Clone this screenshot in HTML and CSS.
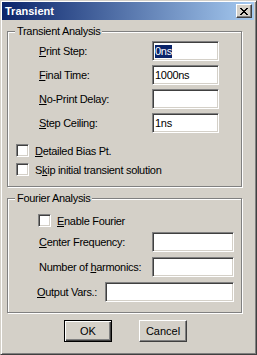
FILE: index.html
```
<!DOCTYPE html>
<html>
<head>
    <title>Transient</title>
    <link rel="stylesheet" href="styles.css">
</head>
<body>
    <div class="window">
        <div class="titlebar">
            <span class="title">Transient</span>
            <span class="close">
                <svg width="8" height="7" viewBox="0 0 8 7">
                    <path d="M0 0h2v1h-2zM6 0h2v1h-2zM1 1h2v1h-2zM5 1h2v1h-2zM2 2h4v1h-4zM3 3h2v1h-2zM2 4h4v1h-4zM1 5h2v1h-2zM5 5h2v1h-2zM0 6h2v1h-2zM6 6h2v1h-2z" fill="#000"/>
                </svg>
            </span>
        </div>

        <div class="client">
            <fieldset class="group group-transient">
                <legend>Transient Analysis</legend>
                <div class="field">
                    <span class="label"><u>P</u>rint Step:</span>
                    <span class="edit"><span class="selected">0ns</span></span>
                </div>
                <div class="field">
                    <span class="label"><u>F</u>inal Time:</span>
                    <span class="edit">1000ns</span>
                </div>
                <div class="field">
                    <span class="label"><u>N</u>o-Print Delay:</span>
                    <span class="edit"></span>
                </div>
                <div class="field">
                    <span class="label"><u>S</u>tep Ceiling:</span>
                    <span class="edit">1ns</span>
                </div>
                <div class="check first"><span class="box"></span><span><u>D</u>etailed Bias Pt.</span></div>
                <div class="check"><span class="box"></span><span>S<u>k</u>ip initial transient solution</span></div>
            </fieldset>

            <fieldset class="group group-fourier">
                <legend>Fourier Analysis</legend>
                <div class="check enable"><span class="box"></span><span><u>E</u>nable Fourier</span></div>
                <div class="field">
                    <span class="label"><u>C</u>enter Frequency:</span>
                    <span class="edit wide"></span>
                </div>
                <div class="field">
                    <span class="label">Number of <u>h</u>armonics:</span>
                    <span class="edit wide"></span>
                </div>
                <div class="field output">
                    <span class="label"><u>O</u>utput Vars.:</span>
                    <span class="edit long"></span>
                </div>
            </fieldset>

            <div class="buttons">
                <button class="btn default">OK</button>
                <button class="btn">Cancel</button>
            </div>
        </div>
    </div>
</body>
</html>
```
FILE: styles.css
```
body {
    margin: 0;
    background-color: #d4d0c8;
    font-family: 'Liberation Sans', Arial, sans-serif;
    font-size: 11px;
    color: #000;
}
.window {
    width: 257px;
    height: 355px;
    box-sizing: border-box;
    background-color: #d4d0c8;
    border: 1px solid;
    border-color: #d4d0c8 #404040 #404040 #d4d0c8;
    box-shadow: inset 1px 1px 0 #fff, inset -1px -1px 0 #808080;
    padding: 1px;
}
.titlebar {
    height: 18px;
    display: flex;
    align-items: center;
    justify-content: space-between;
    padding-left: 3px;
    margin-right: 1px;
    background: linear-gradient(to right, #0a246a, #a6caf0);
}
.title {
    color: #fff;
    font-weight: bold;
    font-size: 11px;
}
.close {
    width: 16px;
    height: 14px;
    box-sizing: border-box;
    margin-right: 2px;
    display: flex;
    align-items: center;
    justify-content: center;
    background-color: #d4d0c8;
    border: 1px solid;
    border-color: #fff #404040 #404040 #fff;
    box-shadow: inset -1px -1px 0 #808080;
}
.client {
    padding-left: 5px;
    letter-spacing: -0.3px;
}
.group {
    width: 235px;
    box-sizing: border-box;
    margin: 5px 0 0 0;
    padding: 0;
    border: 1px solid #808080;
    box-shadow: inset 1px 1px 0 #fff, 1px 1px 0 #fff;
    min-width: 0;
}
.group legend {
    margin-left: 7px;
    padding: 0 2px;
    line-height: 13px;
    background-color: #d4d0c8;
}
.group-transient {
    padding-top: 3px;
    padding-bottom: 10px;
}
.group-fourier {
    padding-top: 9px;
    padding-bottom: 10px;
}
.field {
    display: flex;
    align-items: center;
    padding-left: 31px;
    margin-bottom: 4px;
}
.group-fourier .field {
    margin-top: 5px;
    margin-bottom: 0;
}
.field .label {
    width: 113px;
    flex-shrink: 0;
}
.field.output {
    padding-left: 29px;
}
.field.output .label {
    width: 68px;
}
.edit {
    width: 67px;
    height: 20px;
    box-sizing: border-box;
    padding: 0 1px;
    display: flex;
    align-items: center;
    background-color: #fff;
    border: 1px solid;
    border-color: #808080 #fff #fff #808080;
    box-shadow: inset 1px 1px 0 #404040, inset -1px -1px 0 #d4d0c8;
    padding-left: 2px;
}
.edit.wide {
    width: 82px;
}
.edit.long {
    width: 129px;
}
.selected {
    background-color: #0a246a;
    color: #fff;
    line-height: 13px;
}
.check {
    display: flex;
    align-items: center;
    gap: 6px;
    padding-left: 8px;
    height: 13px;
    margin-top: 6px;
}
.check.first {
    margin-top: 11px;
}
.check.enable {
    padding-left: 30px;
    margin-top: 0;
}
.box {
    width: 13px;
    height: 13px;
    box-sizing: border-box;
    background-color: #fff;
    border: 1px solid;
    border-color: #808080 #fff #fff #808080;
    box-shadow: inset 1px 1px 0 #404040, inset -1px -1px 0 #d4d0c8;
}
.buttons {
    display: flex;
    gap: 27px;
    padding-left: 57px;
    margin-top: 7px;
}
.btn {
    width: 48px;
    height: 22px;
    padding: 0;
    font-family: 'Liberation Sans', Arial, sans-serif;
    font-size: 11px;
    color: #000;
    background-color: #d4d0c8;
    border: 1px solid;
    border-color: #fff #404040 #404040 #fff;
    box-shadow: inset -1px -1px 0 #808080;
}
.btn.default {
    border: 1px solid #000;
    box-shadow: inset 1px 1px 0 #fff, inset -1px -1px 0 #404040, inset -2px -2px 0 #808080;
}
```
